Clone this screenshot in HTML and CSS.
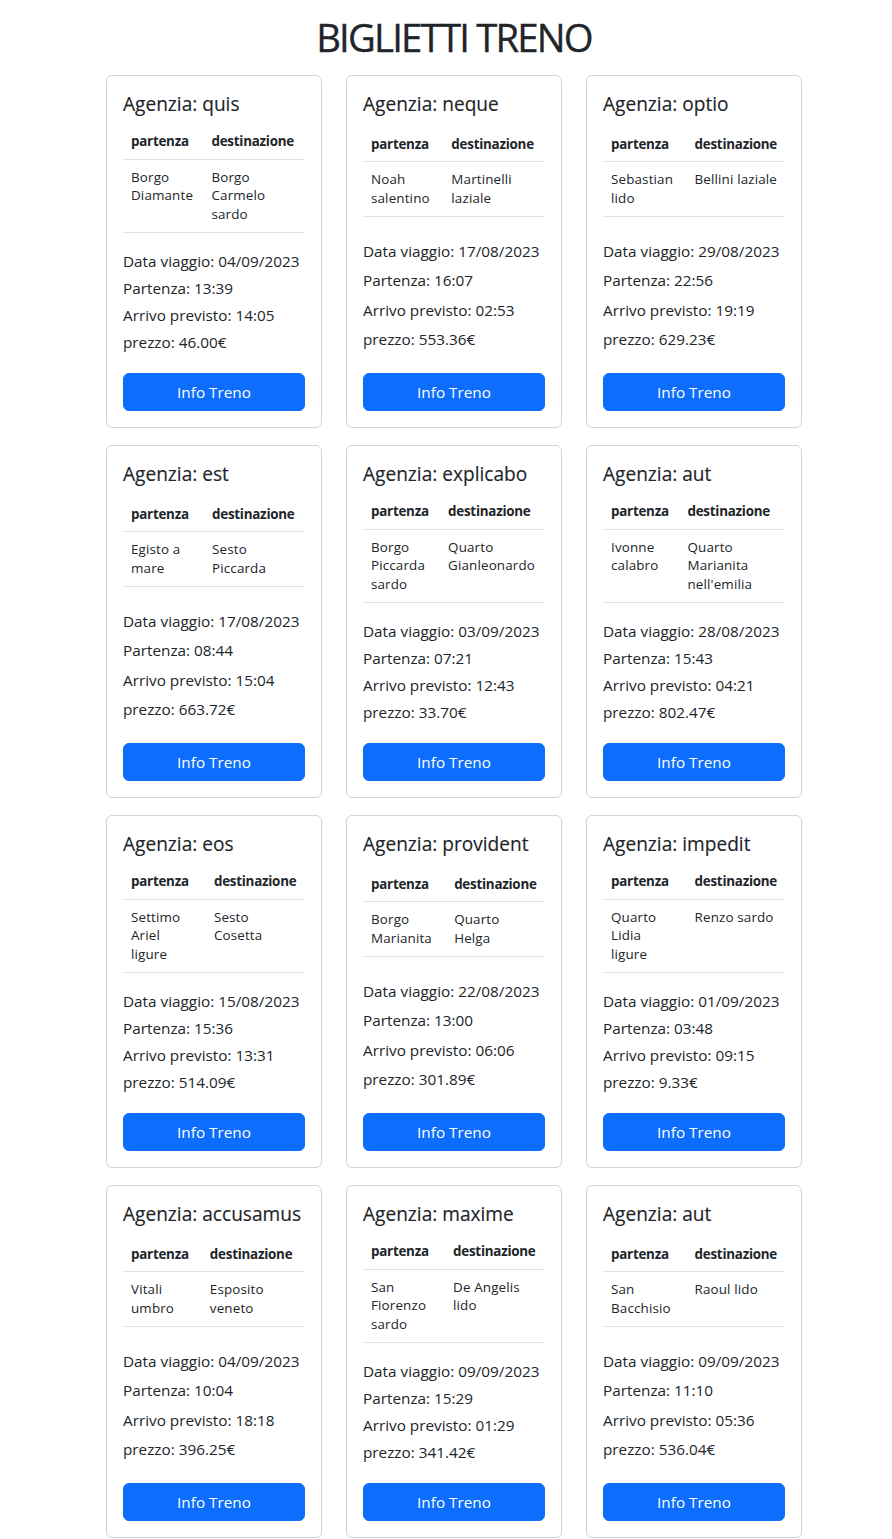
FILE: index.html
```html
<!DOCTYPE html>
<html lang="it">
<head>
<meta charset="utf-8">
<title>Biglietti Treno</title>
<link rel="stylesheet" href="styles.css">
</head>
<body>
<div class="page">
  <h1 class="page-title">BIGLIETTI TRENO</h1>
  <div class="grid">

    <div class="card"><div class="card-body">
      <h5 class="card-title">Agenzia: quis</h5>
      <table class="route"><thead><tr><th>partenza</th><th>destinazione</th></tr></thead>
      <tbody><tr><td>Borgo Diamante</td><td>Borgo Carmelo sardo</td></tr></tbody></table>
      <div class="spacer"></div>
      <p>Data viaggio: 04/09/2023</p><p>Partenza: 13:39</p><p>Arrivo previsto: 14:05</p><p>prezzo: 46.00€</p>
      <a class="btn" href="#">Info Treno</a>
    </div></div>

    <div class="card"><div class="card-body">
      <h5 class="card-title">Agenzia: neque</h5>
      <table class="route"><thead><tr><th>partenza</th><th>destinazione</th></tr></thead>
      <tbody><tr><td>Noah salentino</td><td>Martinelli laziale</td></tr></tbody></table>
      <div class="spacer"></div>
      <p>Data viaggio: 17/08/2023</p><p>Partenza: 16:07</p><p>Arrivo previsto: 02:53</p><p>prezzo: 553.36€</p>
      <a class="btn" href="#">Info Treno</a>
    </div></div>

    <div class="card"><div class="card-body">
      <h5 class="card-title">Agenzia: optio</h5>
      <table class="route"><thead><tr><th>partenza</th><th>destinazione</th></tr></thead>
      <tbody><tr><td>Sebastian lido</td><td>Bellini laziale</td></tr></tbody></table>
      <div class="spacer"></div>
      <p>Data viaggio: 29/08/2023</p><p>Partenza: 22:56</p><p>Arrivo previsto: 19:19</p><p>prezzo: 629.23€</p>
      <a class="btn" href="#">Info Treno</a>
    </div></div>

    <div class="card"><div class="card-body">
      <h5 class="card-title">Agenzia: est</h5>
      <table class="route"><thead><tr><th>partenza</th><th>destinazione</th></tr></thead>
      <tbody><tr><td>Egisto a mare</td><td>Sesto Piccarda</td></tr></tbody></table>
      <div class="spacer"></div>
      <p>Data viaggio: 17/08/2023</p><p>Partenza: 08:44</p><p>Arrivo previsto: 15:04</p><p>prezzo: 663.72€</p>
      <a class="btn" href="#">Info Treno</a>
    </div></div>

    <div class="card"><div class="card-body">
      <h5 class="card-title">Agenzia: explicabo</h5>
      <table class="route"><thead><tr><th>partenza</th><th>destinazione</th></tr></thead>
      <tbody><tr><td>Borgo Piccarda sardo</td><td>Quarto Gianleonardo</td></tr></tbody></table>
      <div class="spacer"></div>
      <p>Data viaggio: 03/09/2023</p><p>Partenza: 07:21</p><p>Arrivo previsto: 12:43</p><p>prezzo: 33.70€</p>
      <a class="btn" href="#">Info Treno</a>
    </div></div>

    <div class="card"><div class="card-body">
      <h5 class="card-title">Agenzia: aut</h5>
      <table class="route"><thead><tr><th>partenza</th><th>destinazione</th></tr></thead>
      <tbody><tr><td>Ivonne calabro</td><td>Quarto Marianita nell'emilia</td></tr></tbody></table>
      <div class="spacer"></div>
      <p>Data viaggio: 28/08/2023</p><p>Partenza: 15:43</p><p>Arrivo previsto: 04:21</p><p>prezzo: 802.47€</p>
      <a class="btn" href="#">Info Treno</a>
    </div></div>

    <div class="card"><div class="card-body">
      <h5 class="card-title">Agenzia: eos</h5>
      <table class="route"><thead><tr><th>partenza</th><th>destinazione</th></tr></thead>
      <tbody><tr><td>Settimo Ariel ligure</td><td>Sesto Cosetta</td></tr></tbody></table>
      <div class="spacer"></div>
      <p>Data viaggio: 15/08/2023</p><p>Partenza: 15:36</p><p>Arrivo previsto: 13:31</p><p>prezzo: 514.09€</p>
      <a class="btn" href="#">Info Treno</a>
    </div></div>

    <div class="card"><div class="card-body">
      <h5 class="card-title">Agenzia: provident</h5>
      <table class="route"><thead><tr><th>partenza</th><th>destinazione</th></tr></thead>
      <tbody><tr><td>Borgo Marianita</td><td>Quarto Helga</td></tr></tbody></table>
      <div class="spacer"></div>
      <p>Data viaggio: 22/08/2023</p><p>Partenza: 13:00</p><p>Arrivo previsto: 06:06</p><p>prezzo: 301.89€</p>
      <a class="btn" href="#">Info Treno</a>
    </div></div>

    <div class="card"><div class="card-body">
      <h5 class="card-title">Agenzia: impedit</h5>
      <table class="route"><thead><tr><th>partenza</th><th>destinazione</th></tr></thead>
      <tbody><tr><td>Quarto Lidia ligure</td><td>Renzo sardo</td></tr></tbody></table>
      <div class="spacer"></div>
      <p>Data viaggio: 01/09/2023</p><p>Partenza: 03:48</p><p>Arrivo previsto: 09:15</p><p>prezzo: 9.33€</p>
      <a class="btn" href="#">Info Treno</a>
    </div></div>

    <div class="card"><div class="card-body">
      <h5 class="card-title">Agenzia: accusamus</h5>
      <table class="route"><thead><tr><th>partenza</th><th>destinazione</th></tr></thead>
      <tbody><tr><td>Vitali umbro</td><td>Esposito veneto</td></tr></tbody></table>
      <div class="spacer"></div>
      <p>Data viaggio: 04/09/2023</p><p>Partenza: 10:04</p><p>Arrivo previsto: 18:18</p><p>prezzo: 396.25€</p>
      <a class="btn" href="#">Info Treno</a>
    </div></div>

    <div class="card"><div class="card-body">
      <h5 class="card-title">Agenzia: maxime</h5>
      <table class="route"><thead><tr><th>partenza</th><th>destinazione</th></tr></thead>
      <tbody><tr><td>San Fiorenzo sardo</td><td>De Angelis lido</td></tr></tbody></table>
      <div class="spacer"></div>
      <p>Data viaggio: 09/09/2023</p><p>Partenza: 15:29</p><p>Arrivo previsto: 01:29</p><p>prezzo: 341.42€</p>
      <a class="btn" href="#">Info Treno</a>
    </div></div>

    <div class="card"><div class="card-body">
      <h5 class="card-title">Agenzia: aut</h5>
      <table class="route"><thead><tr><th>partenza</th><th>destinazione</th></tr></thead>
      <tbody><tr><td>San Bacchisio</td><td>Raoul lido</td></tr></tbody></table>
      <div class="spacer"></div>
      <p>Data viaggio: 09/09/2023</p><p>Partenza: 11:10</p><p>Arrivo previsto: 05:36</p><p>prezzo: 536.04€</p>
      <a class="btn" href="#">Info Treno</a>
    </div></div>

  </div>
</div>
</body>
</html>
```

FILE: styles.css
```css
* {
  box-sizing: border-box;
}

html, body {
  background: #ffffff;
}

body {
  margin: 0;
  padding: 0 0 0 16px;
  font-family: "Open Sans", "Noto Sans", sans-serif;
  font-size: 15.3px;
  line-height: 24px;
  color: #212529;
}

.page {
  width: 696px;
  margin: 0 auto;
}

.page-title {
  margin: 13px 0 14px;
  font-size: 38.3px;
  line-height: 48px;
  font-weight: 400;
  letter-spacing: -1.8px;
  -webkit-text-stroke: 0.35px #212529;
  text-align: center;
}

.grid {
  display: grid;
  grid-template-columns: repeat(3, 216px);
  column-gap: 24px;
  row-gap: 17px;
}

.card {
  height: 353px;
  border: 1px solid rgba(0, 0, 0, 0.175);
  border-radius: 6px;
  display: flex;
  flex-direction: column;
}

.card-body {
  flex: 1;
  padding: 16px;
  display: flex;
  flex-direction: column;
  justify-content: space-between;
}

.card-title {
  margin: 0 0 5px;
  font-size: 19.1px;
  line-height: 24px;
  font-weight: 400;
  -webkit-text-stroke: 0.15px #212529;
}

.route {
  width: 100%;
  border-collapse: collapse;
  margin: 0 0 11px;
  font-size: 13.4px;
  line-height: 18.67px;
}

.route th,
.route td {
  padding: 8px;
  text-align: left;
  vertical-align: top;
  border-bottom: 1px solid #dee2e6;
}

.route th {
  font-weight: 700;
  letter-spacing: -0.25px;
}

.route td {
  letter-spacing: 0.15px;
}

.spacer {
  height: 0;
}

.card-body p {
  margin: 0;
}

.btn {
  display: block;
  margin-top: 16px;
  height: 38px;
  line-height: 36px;
  border: 1px solid #0d6efd;
  border-radius: 6px;
  background: #0d6efd;
  color: #ffffff;
  text-align: center;
  text-decoration: none;
  font-size: 15.3px;
}
```
